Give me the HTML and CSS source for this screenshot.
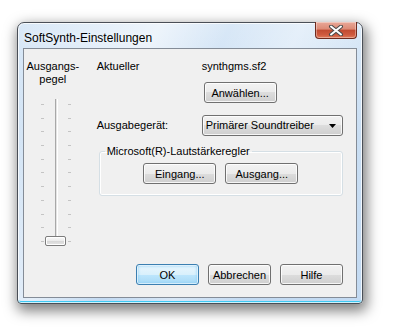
FILE: index.html
```html
<!DOCTYPE html>
<html lang="de">
<head>
<meta charset="utf-8">
<title>SoftSynth-Einstellungen</title>
<link rel="stylesheet" href="styles.css">
</head>
<body>
<div class="window">
  <div class="titlebar">
    <span class="title">SoftSynth-Einstellungen</span>
    <button class="close" aria-label="Schließen">
      <svg width="16" height="11" viewBox="0 0 16 11"><path d="M3 1.5 L13 9.5 M13 1.5 L3 9.5" stroke="#4a4a4a" stroke-width="4" stroke-linecap="round"/><path d="M3 1.5 L13 9.5 M13 1.5 L3 9.5" stroke="#ffffff" stroke-width="2" stroke-linecap="round"/></svg>
    </button>
  </div>
  <div class="client">
    <div class="top">
      <div class="leftcol">
        <div class="vlabel">Ausgangs-<br>pegel</div>
        <div class="slider">
          <div class="ticks"><i></i><i></i><i></i><i></i><i></i><i></i><i></i><i></i><i></i><i></i><i></i></div>
          <div class="track"></div>
          <div class="ticks right"><i></i><i></i><i></i><i></i><i></i><i></i><i></i><i></i><i></i><i></i><i></i></div>
          <div class="thumb"></div>
        </div>
      </div>
      <div class="rightcol">
        <div class="row">
          <span class="lbl">Aktueller</span>
          <span class="val">synthgms.sf2</span>
        </div>
        <div class="row btnrow">
          <span></span>
          <button class="btn w72">Anwählen...</button>
        </div>
        <div class="row comborow">
          <span class="lbl">Ausgabegerät:</span>
          <div class="combo"><span>Primärer Soundtreiber</span><svg width="7" height="4" viewBox="0 0 7 4"><path d="M0 0 H7 L3.5 4 Z" fill="#000"/></svg></div>
        </div>
        <fieldset class="group">
          <legend>Microsoft(R)-Lautstärkeregler</legend>
          <div class="groupbtns">
            <button class="btn w72">Eingang...</button>
            <button class="btn w72">Ausgang...</button>
          </div>
        </fieldset>
      </div>
    </div>
    <div class="bottom">
      <button class="btn def">OK</button>
      <button class="btn">Abbrechen</button>
      <button class="btn">Hilfe</button>
    </div>
  </div>
</div>
</body>
</html>
```
FILE: styles.css
```css
html, body {
  margin: 0;
  padding: 0;
  background: #ffffff;
}
body {
  width: 393px;
  height: 334px;
  overflow: hidden;
  font-family: "Liberation Sans", Arial, sans-serif;
  font-size: 11px;
  color: #000;
}
.window {
  margin: 22px 0 0 17px;
  width: 346px;
  height: 282px;
  box-sizing: border-box;
  border: 1px solid #4a4f57;
  border-radius: 7px 7px 4px 4px;
  background:
    linear-gradient(115deg, rgba(255,255,255,0) 0%, rgba(255,255,255,0.55) 30%, rgba(255,255,255,0) 45%, rgba(255,255,255,0.35) 60%, rgba(255,255,255,0) 75%),
    linear-gradient(to bottom, #d9e8f7 0%, #c9def3 40%, #c3daf2 100%);
  box-shadow:
    inset 0 0 0 1px rgba(255,255,255,0.75),
    inset 0 -2px 0 0 #3ec9f4,
    2px 5px 13px 2px rgba(0,0,0,0.5);
  display: flex;
  flex-direction: column;
}
.titlebar {
  height: 25px;
  display: flex;
  justify-content: space-between;
  align-items: flex-start;
  padding: 0 5px 0 6px;
}
.title {
  font-family: "Liberation Sans", Arial, sans-serif;
  font-size: 12px;
  line-height: 14px;
  margin-top: 8px;
  color: #000;
  text-shadow: 0 0 6px rgba(255,255,255,0.9);
}
.close {
  margin: -1px 0 0 0;
  width: 42px;
  height: 17px;
  padding: 0;
  border: 1px solid #6e2a1e;
  border-top: none;
  border-radius: 0 0 4px 4px;
  background: linear-gradient(to bottom, #e9a898 0%, #dc8a75 45%, #c14a31 50%, #cf5a3f 80%, #e07b5a 100%);
  box-shadow: inset 0 0 0 1px rgba(255,255,255,0.35);
  display: flex;
  align-items: center;
  justify-content: center;
}
.client {
  flex: 1;
  margin: 0 5px 5px 5px;
  border: 1px solid #848c97;
  background: #f0f0f0;
  display: flex;
  flex-direction: column;
  padding: 11px 13px 12px 0;
}
.top {
  display: flex;
  align-items: flex-start;
}
.leftcol {
  width: 58px;
  display: flex;
  flex-direction: column;
}
.vlabel {
  text-align: center;
  line-height: 13px;
  padding-left: 0;
}
.slider {
  position: relative;
  margin-top: 13px;
  height: 150px;
  display: flex;
  align-items: flex-start;
}
.ticks {
  margin: 5px 0 0 17px;
  width: 3px;
  height: 138px;
  display: flex;
  flex-direction: column;
  justify-content: space-between;
}
.ticks i {
  display: block;
  height: 1px;
  background: #c4c4c4;
}
.ticks.right {
  margin-left: 10px;
}
.track {
  margin-left: 11px;
  width: 3px;
  height: 144px;
  background: linear-gradient(to right, #a8a8a8 0 1px, #e4e4e4 1px 2px, #ffffff 2px 3px);
}
.thumb {
  position: absolute;
  left: 21px;
  top: 137px;
  width: 21px;
  height: 10px;
  box-sizing: border-box;
  border: 1px solid #7c7c7c;
  border-radius: 2px;
  background: linear-gradient(to bottom, #fbfbfb 0%, #ececec 45%, #d8d8d8 55%, #e6e6e6 100%);
  box-shadow: inset 0 0 0 1px #ffffff;
}
.rightcol {
  margin-left: 15px;
  width: 248px;
  display: flex;
  flex-direction: column;
}
.row {
  display: grid;
  grid-template-columns: 105px 1fr;
  align-items: center;
  line-height: 13px;
}
.btnrow {
  margin-top: 9px;
}
.btnrow .btn {
  margin-left: 2px;
}
.comborow {
  margin-top: 12px;
}
.btn {
  font-family: inherit;
  font-size: 11px;
  color: #000;
  height: 21px;
  width: 63px;
  padding: 0;
  box-sizing: border-box;
  border: 1px solid #707070;
  border-radius: 3px;
  background: linear-gradient(to bottom, #f2f2f2 0%, #ebebeb 50%, #dddddd 50%, #cfcfcf 100%);
  box-shadow: inset 0 0 0 1px rgba(255,255,255,0.8);
}
.btn.w72 {
  width: 73px;
}
.btn.def {
  border-color: #3c7fb1;
  background: linear-gradient(to bottom, #eaf6fd 0%, #d9f0fc 50%, #bee6fd 50%, #a7d9f5 100%);
  box-shadow: inset 0 0 0 1px rgba(255,255,255,0.6), inset 0 0 3px 1px #8ed0f5;
}
.combo {
  height: 21px;
  box-sizing: border-box;
  border: 1px solid #707070;
  border-radius: 3px;
  background: linear-gradient(to bottom, #f2f2f2 0%, #ebebeb 50%, #dddddd 50%, #cfcfcf 100%);
  box-shadow: inset 0 0 0 1px rgba(255,255,255,0.8);
  display: flex;
  align-items: center;
  justify-content: space-between;
  padding: 0 6px 0 3px;
}
.group {
  margin: 9px 0 0 2px;
  padding: 5px 0 11px 0;
  border: 1px solid #d5dfe5;
  border-radius: 3px;
  box-shadow: 0 0 0 1px #ffffff inset;
  min-width: 0;
}
.group legend {
  margin-left: 5px;
  padding: 0 2px;
  line-height: 13px;
}
.groupbtns {
  display: flex;
  justify-content: center;
  gap: 9px;
}
.bottom {
  margin-top: auto;
  display: flex;
  justify-content: flex-end;
  gap: 9px;
}
```
